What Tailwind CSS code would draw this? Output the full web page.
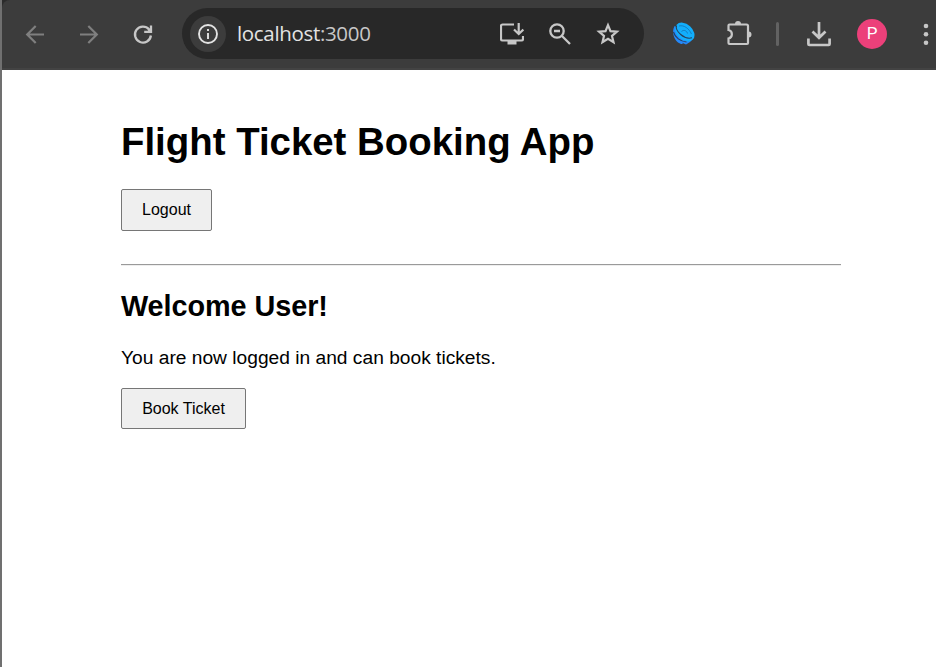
<!DOCTYPE html>
<html lang="en">
<head>
<meta charset="utf-8">
<title>Flight Ticket Booking App</title>
<script src="https://cdn.jsdelivr.net/npm/@tailwindcss/browser@4"></script>
</head>
<body class="h-[667px] w-[936px] overflow-hidden bg-[#202020]">
<div class="flex h-full flex-col border-l-2 border-[#707070] bg-[#2b2b2b]">
  <header class="flex h-[70px] shrink-0 items-center rounded-tl-lg border-b-2 border-[#434343] bg-[#3c3c3c] pb-px pl-[21px] text-[#c7c7c7]">
    <svg class="size-6 shrink-0 text-[#7f7f7f]" viewBox="0 0 24 24" fill="none" stroke="currentColor" stroke-width="2.200"><path d="M21 12.500H4.500M12.700 4L4.200 12.500l8.500 8.500"/></svg>
    <svg class="ml-[30px] size-6 shrink-0 text-[#7f7f7f]" viewBox="0 0 24 24" fill="none" stroke="currentColor" stroke-width="2.200"><path d="M3 12.500h16.500M11.300 4l8.500 8.500-8.500 8.500"/></svg>
    <svg class="ml-[30px] size-6 shrink-0" viewBox="0 0 24 24" fill="none" stroke="currentColor" stroke-width="2.300"><path d="M19.900 13.500a8 8 0 1 1-1.800-6.100L19.500 9M20 3.500v6.300h-6.800"/><path d="M20.500 5v5.500h-5.500z" fill="currentColor" stroke="none"/></svg>
    <div class="ml-[27px] flex h-[51px] w-[462px] shrink-0 items-center rounded-full bg-[#282828] pl-2">
      <span class="flex size-9 items-center justify-center rounded-full bg-[#3c3c3c]">
        <svg class="size-5 text-[#e3e3e3]" viewBox="0 0 20 20" fill="none" stroke="currentColor" stroke-width="1.900"><circle cx="10" cy="10" r="9"/><path d="M10 9v6M10 5v2"/></svg>
      </span>
      <span class="ml-[11px] w-[263px] pb-px font-['Open_Sans',sans-serif] text-[20.5px] leading-7 tracking-[-0.330px] text-[#e3e3e3]">localhost<span class="text-[#c7c7c7]">:3000</span></span>
      <svg class="h-6 w-6 shrink-0" viewBox="0 0 24 24" fill="none" stroke="currentColor" stroke-width="2.200"><path d="M14 2.500H2.500a1.500 1.500 0 0 0-1.500 1.500v13a1.500 1.500 0 0 0 1.500 1.500h19A1.500 1.500 0 0 0 23 17v-3M18.700 1v10.500M14 7.500l4.700 4.500 4.700-4.500"/><path d="M7.500 19h9v3.500h-9z" fill="currentColor" stroke="none"/></svg>
      <svg class="ml-6 size-6 shrink-0" viewBox="0 0 24 24" fill="none" stroke="currentColor" stroke-width="2.300"><circle cx="9" cy="9" r="6.700"/><path d="M6 9h6M14 14l8 8"/></svg>
      <svg class="ml-6 size-6 shrink-0" viewBox="0 0 24 24" fill="none" stroke="currentColor" stroke-width="2.200"><path d="M12 3.200l2.500 6 6.400.5-4.900 4.200 1.500 6.300-5.500-3.400-5.500 3.400L8 13.900 3.100 9.700l6.400-.5z"/></svg>
    </div>
    <svg class="ml-7 size-[23px] shrink-0" viewBox="0 0 23 23" fill="none"><path d="M2.500 4C-.5 10 2 17.500 6 20.500l3 1.500h2l-1-1.200 4 1.700 4-2.500L21 17z" fill="#2489fb"/><ellipse cx="12.800" cy="10" rx="11" ry="7.800" transform="rotate(42 12.800 10)" fill="#12aefc"/><path d="M4.500 3.500C3 9 12 18 20 15.800M1.500 10c1.500 5.500 7 9.500 13 10" stroke="#283f59" stroke-width="1.100"/><path d="M9.500 9.500c2.500-2.300 5.500-.5 6 2M7 4c5-1.300 10 2.500 12.500 8" stroke="#1769a5" stroke-width=".7"/></svg>
    <svg class="ml-[31px] h-[26px] w-[26px] shrink-0" viewBox="0 0 26 26" fill="none" stroke="currentColor" stroke-width="2.200"><path d="M3.500 3.500h17a1.500 1.500 0 0 1 1.500 1.500v17a1 1 0 0 1-1 1H3.500a1 1 0 0 1-1-1v-4.500c4.500-1 4.500-7.500 0-8.500V4.500a1 1 0 0 1 1-1z"/><path d="M9 3a3 3 0 0 1 6 0zM22.500 10.500a3 3 0 0 1 0 6z" fill="currentColor" stroke="none"/></svg>
    <span class="ml-6 h-6 w-[3px] shrink-0 rounded-full bg-[#626262]"></span>
    <svg class="ml-7 h-[26px] w-6 shrink-0" viewBox="0 0 24 26" fill="none" stroke="currentColor" stroke-width="2.700"><path d="M12 1v16M5.500 10.500l6.500 6.300 6.500-6.300M1.400 17.500v5.500a1 1 0 0 0 1 1h19.200a1 1 0 0 0 1-1v-5.500"/></svg>
    <span class="ml-[26px] flex size-[30px] shrink-0 items-center justify-center rounded-full bg-[#ec407a] font-[Roboto,sans-serif] text-[17px] leading-none text-white">P</span>
    <svg class="ml-9 h-6 w-[6px] shrink-0" viewBox="0 0 6 24" fill="currentColor"><circle cx="3" cy="4" r="2.300"/><circle cx="3" cy="12.300" r="2.300"/><circle cx="3" cy="20.700" r="2.300"/></svg>
  </header>
  <main class="flex-1 bg-white pt-[50px] pl-[119px] font-['Liberation_Sans',Arial,sans-serif] text-black">
    <h1 class="text-[38.4px] leading-[44px] font-bold">Flight Ticket Booking App</h1>
    <button class="mt-[25px] block h-[42px] w-[91px] rounded-[2px] border border-[#767676] bg-[#efefef] text-[16px]">Logout</button>
    <hr class="mt-[33px] h-[2px] w-[720px] border-t border-b border-t-[#9a9a9a] border-b-[#eeeeee]">
    <h2 class="mt-[23px] text-[28.8px] leading-[34px] font-bold tracking-[-0.050px]">Welcome User!</h2>
    <p class="mt-6 text-[19.2px] leading-[22px]">You are now logged in and can book tickets.</p>
    <button class="mt-[19px] block h-[41px] w-[125px] rounded-[2px] border border-[#767676] bg-[#efefef] text-[16px]">Book Ticket</button>
  </main>
</div>
</body>
</html>
